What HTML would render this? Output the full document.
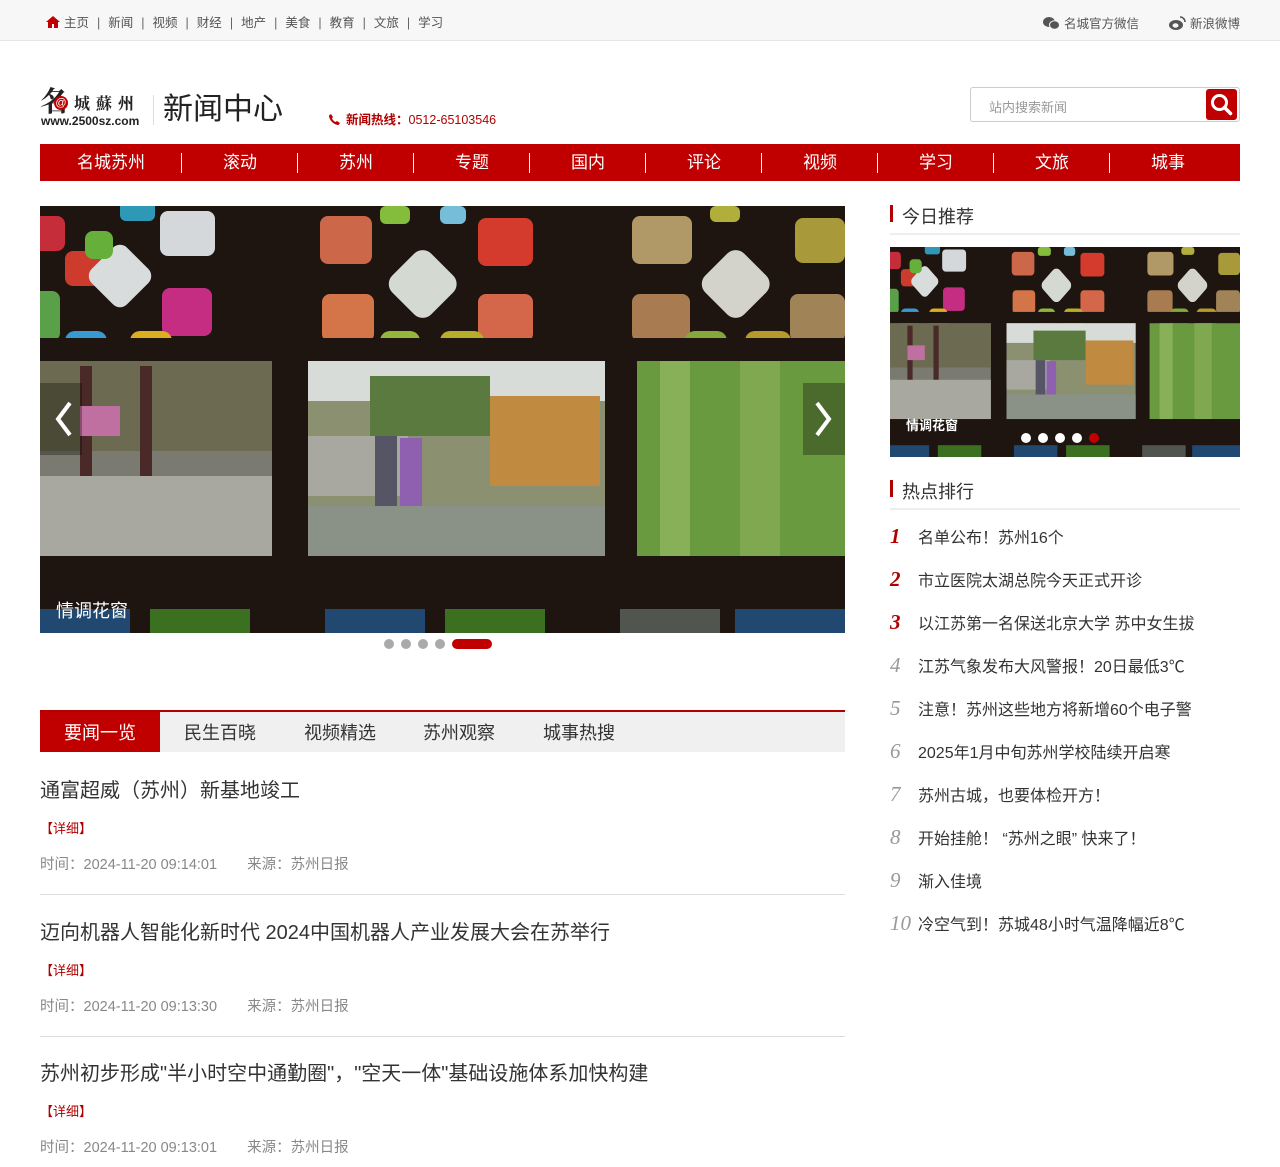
<!DOCTYPE html>
<html><head><meta charset="utf-8">
<style>
*{margin:0;padding:0;box-sizing:border-box}
body{width:1280px;height:1167px;overflow:hidden;background:#fff;font-family:"Liberation Sans","Noto Sans CJK SC",sans-serif;color:#333}
.top{height:41px;background:#f7f7f7;border-bottom:1px solid #e5e5e5;position:relative;font-size:12.5px;color:#555}
.top .l{position:absolute;left:46px;top:12px;white-space:nowrap}
.top .l span.s{margin:0 8px;color:#666}
.top .r{position:absolute;right:40px;top:13px;white-space:nowrap}
.abs{position:absolute}
.nav{position:absolute;left:40px;top:144px;width:1200px;height:37px;background:#c00000;display:flex}
.nav div{width:116px;color:#fff;font-size:17px;text-align:center;line-height:37px;position:relative}
.nav div:first-child{width:142px}
.nav div:last-child{width:130px;padding-right:14px}
.nav div:not(:last-child):after{content:"";position:absolute;right:0;top:9px;height:20px;width:1px;background:#fff}
.tabs{position:absolute;left:40px;top:710px;width:805px;height:42px;background:#f0f0f0;border-top:2px solid #b00000}
.tabs span{position:absolute;top:0;line-height:42px;font-size:18px;color:#333}
.news{position:absolute;left:40px;width:805px}
.news h3{font-weight:normal;font-size:20px;color:#333}
.news .d{font-size:13px;color:#b00000;margin-top:15px}
.news .t{font-size:14.5px;color:#888;margin-top:16px}
.hd{position:absolute;left:890px;width:350px;border-bottom:2px solid #eee;font-size:18px;color:#333;padding-left:12px;height:32px}
.hd:before{content:"";position:absolute;left:0;top:2px;width:3px;height:17px;background:#b00000}
.rk{position:absolute;left:890px;font-size:16px;color:#333;white-space:nowrap}
.rk i{display:inline-block;width:28px;font-family:"Liberation Serif",serif;font-size:21px;color:#999}
.rk i.red{color:#b00000;font-weight:bold}
</style></head><body>
<svg width="0" height="0" style="position:absolute">
<symbol id="sc" viewBox="0 0 805 427">
<rect width="805" height="427" fill="#1e1510"/>
<g opacity=".9">
<rect x="-10" y="10" width="35" height="35" rx="8" fill="#d83040"/>
<rect x="80" y="-10" width="35" height="25" rx="6" fill="#30a8c8"/>
<rect x="120" y="5" width="55" height="45" rx="8" fill="#e8eef2"/>
<rect x="25" y="45" width="40" height="35" rx="8" fill="#e04030"/>
<rect x="55" y="45" width="50" height="50" rx="10" fill="#eef2f4" transform="rotate(45 80 70)"/>
<rect x="45" y="25" width="28" height="28" rx="8" fill="#70c040"/>
<rect x="122" y="82" width="50" height="48" rx="8" fill="#d83090"/>
<rect x="-10" y="85" width="30" height="50" rx="8" fill="#60b050"/>
<rect x="25" y="125" width="42" height="60" rx="10" fill="#3ca8e8"/>
<rect x="90" y="125" width="42" height="60" rx="10" fill="#f0c020"/>
<rect x="280" y="10" width="52" height="48" rx="8" fill="#e07050"/>
<rect x="340" y="0" width="30" height="18" rx="6" fill="#90d040"/>
<rect x="400" y="0" width="26" height="18" rx="6" fill="#80d0f0"/>
<rect x="438" y="12" width="55" height="48" rx="8" fill="#e84030"/>
<rect x="355" y="50" width="55" height="55" rx="12" fill="#e8f0e8" transform="rotate(45 382 78)"/>
<rect x="282" y="88" width="52" height="48" rx="8" fill="#e88050"/>
<rect x="438" y="88" width="55" height="48" rx="8" fill="#e87050"/>
<rect x="340" y="125" width="40" height="60" rx="10" fill="#a0c840"/>
<rect x="400" y="125" width="44" height="60" rx="10" fill="#c8c030"/>
<rect x="592" y="10" width="60" height="48" rx="8" fill="#c0a870"/>
<rect x="670" y="0" width="30" height="16" rx="6" fill="#c0c040"/>
<rect x="755" y="12" width="50" height="45" rx="8" fill="#b8a840"/>
<rect x="668" y="50" width="55" height="55" rx="12" fill="#e8e8e0" transform="rotate(45 695 78)"/>
<rect x="592" y="88" width="58" height="48" rx="8" fill="#b88858"/>
<rect x="750" y="88" width="55" height="48" rx="8" fill="#b09060"/>
<rect x="645" y="125" width="42" height="60" rx="10" fill="#90b840"/>
<rect x="705" y="125" width="46" height="60" rx="10" fill="#c8a830"/>
</g>
<rect x="0" y="132" width="805" height="23" fill="#1e1510"/>
<rect x="0" y="155" width="232" height="195" fill="#7a7a70"/>
<rect x="0" y="155" width="232" height="90" fill="#6c6a50"/>
<rect x="40" y="160" width="12" height="140" fill="#4a2a28"/>
<rect x="100" y="160" width="12" height="140" fill="#4a2a28"/>
<rect x="0" y="270" width="232" height="80" fill="#a8a8a0"/>
<rect x="40" y="200" width="40" height="30" fill="#c070a0"/>
<rect x="268" y="155" width="297" height="195" fill="#8a9070"/>
<rect x="268" y="155" width="297" height="40" fill="#d8dcd8"/>
<rect x="330" y="170" width="120" height="60" fill="#5a7a40"/>
<rect x="450" y="190" width="110" height="90" fill="#c08a40"/>
<rect x="268" y="230" width="100" height="60" fill="#a8a8a0"/>
<rect x="335" y="230" width="22" height="70" fill="#556"/>
<rect x="360" y="232" width="22" height="68" fill="#9060b0"/>
<rect x="268" y="300" width="297" height="50" fill="#8a9288"/>
<rect x="597" y="155" width="208" height="195" fill="#6a9a40"/>
<rect x="620" y="155" width="30" height="195" fill="#88b058"/>
<rect x="700" y="155" width="40" height="195" fill="#80a850"/>
<rect x="0" y="350" width="805" height="77" fill="#1e1510"/>
<rect x="0" y="403" width="90" height="24" fill="#204870"/>
<rect x="110" y="403" width="100" height="24" fill="#3a7020"/>
<rect x="285" y="403" width="100" height="24" fill="#204870"/>
<rect x="405" y="403" width="100" height="24" fill="#3a7020"/>
<rect x="580" y="403" width="100" height="24" fill="#505550"/>
<rect x="695" y="403" width="110" height="24" fill="#204870"/>
</symbol>
</svg>

<div class="top">
 <div class="l"><svg width="14" height="12" viewBox="0 0 14 12" style="vertical-align:-1px;margin-right:4px"><path d="M7 0L0 6h2v6h4V8h2v4h4V6h2z" fill="#c00000"/></svg>主页<span class="s">|</span>新闻<span class="s">|</span>视频<span class="s">|</span>财经<span class="s">|</span>地产<span class="s">|</span>美食<span class="s">|</span>教育<span class="s">|</span>文旅<span class="s">|</span>学习</div>
 <div class="r"><svg width="17" height="14" viewBox="0 0 17 14" style="vertical-align:-2px;margin-right:4px"><ellipse cx="6" cy="6" rx="6" ry="5" fill="#555"/><ellipse cx="11.5" cy="9" rx="5" ry="4.2" fill="#555" stroke="#f7f7f7"/></svg>名城官方微信<span style="display:inline-block;width:30px"></span><svg width="17" height="14" viewBox="0 0 17 14" style="vertical-align:-2px;margin-right:4px"><ellipse cx="7" cy="9" rx="7" ry="5" fill="#555"/><ellipse cx="6.5" cy="9.5" rx="3" ry="2.2" fill="#f7f7f7"/><path d="M11 1a5 5 0 015 5" stroke="#555" stroke-width="1.6" fill="none"/></svg>新浪微博</div>
</div>

<div class="abs" style="left:40px;top:86px;width:105px;height:42px">
 <div style="position:absolute;left:0;top:0;font-family:'Noto Serif CJK SC',serif;font-size:28px;font-weight:bold;color:#222;line-height:28px">名</div>
 <div style="position:absolute;left:14px;top:10px;width:14px;height:14px;border-radius:50%;background:#c00000;color:#fff;font-size:11px;line-height:14px;text-align:center">@</div>
 <div style="position:absolute;left:34px;top:8px;font-family:'Noto Serif CJK SC',serif;font-size:16px;font-weight:bold;color:#222;letter-spacing:6px;line-height:18px">城蘇州</div>
 <div style="position:absolute;left:1px;top:28px;font-size:12px;font-weight:bold;color:#222">www.2500sz.com</div>
</div>
<div class="abs" style="left:153px;top:95px;width:1px;height:30px;background:#ddd"></div>
<div class="abs" style="left:163px;top:90px;font-size:30px;color:#222;line-height:40px">新闻中心</div>
<div class="abs" style="left:329px;top:109px;font-size:12.5px;color:#b00000;white-space:nowrap"><svg width="11" height="11" viewBox="0 0 11 11" style="vertical-align:-1px;margin-right:6px"><path d="M2 0l2 3-1 1.5c.8 1.6 2 2.8 3.5 3.5L8 7l3 2-1.5 2C5 11 0 6 0 1.5z" fill="#c00000"/></svg><b>新闻热线：</b>0512-65103546</div>
<div class="abs" style="left:970px;top:87px;width:270px;height:35px;border:1px solid #ccc;border-radius:3px">
 <span style="position:absolute;left:18px;top:9px;font-size:13px;color:#999">站内搜索新闻</span>
 <div style="position:absolute;right:2px;top:1px;width:31px;height:31px;background:#c00000;border-radius:3px"><svg width="31" height="31" viewBox="0 0 31 31"><circle cx="13.5" cy="13.5" r="7" stroke="#fff" stroke-width="3" fill="none"/><path d="M18.5 18.5l6 6" stroke="#fff" stroke-width="3.5" stroke-linecap="round"/></svg></div>
</div>

<div class="nav"><div>名城苏州</div><div>滚动</div><div>苏州</div><div>专题</div><div>国内</div><div>评论</div><div>视频</div><div>学习</div><div>文旅</div><div>城事</div></div>

<svg class="abs" style="left:40px;top:206px" width="805" height="427"><use href="#sc"/></svg>
<div class="abs" style="left:40px;top:383px;width:42px;height:72px;background:rgba(0,0,0,.3)"><svg width="42" height="72"><path d="M30 20L18 36l12 16" stroke="#fff" stroke-width="4" fill="none"/></svg></div>
<div class="abs" style="left:803px;top:383px;width:42px;height:72px;background:rgba(0,0,0,.3)"><svg width="42" height="72"><path d="M14 20l12 16-12 16" stroke="#fff" stroke-width="4" fill="none"/></svg></div>
<div class="abs" style="left:56px;top:597px;font-size:18px;color:#fff">情调花窗</div>
<div class="abs" style="left:384px;top:639px;height:10px;white-space:nowrap;font-size:0">
 <span style="display:inline-block;width:10px;height:10px;border-radius:5px;background:#aaa;margin-right:7px"></span><span style="display:inline-block;width:10px;height:10px;border-radius:5px;background:#aaa;margin-right:7px"></span><span style="display:inline-block;width:10px;height:10px;border-radius:5px;background:#aaa;margin-right:7px"></span><span style="display:inline-block;width:10px;height:10px;border-radius:5px;background:#aaa;margin-right:7px"></span><span style="display:inline-block;width:40px;height:10px;border-radius:5px;background:#c00000"></span>
</div>

<div class="tabs">
 <span style="left:0;width:120px;height:40px;background:#c00000;color:#fff;text-align:center">要闻一览</span>
 <span style="left:144px">民生百晓</span><span style="left:264px">视频精选</span><span style="left:383px">苏州观察</span><span style="left:503px">城事热搜</span>
</div>

<div class="news" style="top:774px"><h3>通富超威（苏州）新基地竣工</h3><div class="d">【详细】</div><div class="t">时间：2024-11-20 09:14:01<span style="margin-left:30px">来源：苏州日报</span></div></div>
<div class="abs" style="left:40px;top:894px;width:805px;height:1px;background:#ddd"></div>
<div class="news" style="top:916px"><h3>迈向机器人智能化新时代 2024中国机器人产业发展大会在苏举行</h3><div class="d">【详细】</div><div class="t">时间：2024-11-20 09:13:30<span style="margin-left:30px">来源：苏州日报</span></div></div>
<div class="abs" style="left:40px;top:1036px;width:805px;height:1px;background:#ddd"></div>
<div class="news" style="top:1057px"><h3>苏州初步形成"半小时空中通勤圈"，"空天一体"基础设施体系加快构建</h3><div class="d">【详细】</div><div class="t">时间：2024-11-20 09:13:01<span style="margin-left:30px">来源：苏州日报</span></div></div>

<div class="hd" style="top:203px">今日推荐</div>
<svg class="abs" style="left:890px;top:247px" width="350" height="210" viewBox="0 0 805 427" preserveAspectRatio="none"><use href="#sc"/></svg>
<div class="abs" style="left:906px;top:415px;font-size:13px;color:#fff;font-weight:bold">情调花窗</div>
<div class="abs" style="left:1021px;top:433px;font-size:0;white-space:nowrap">
 <span style="display:inline-block;width:10px;height:10px;border-radius:5px;background:#fff;margin-right:7px"></span><span style="display:inline-block;width:10px;height:10px;border-radius:5px;background:#fff;margin-right:7px"></span><span style="display:inline-block;width:10px;height:10px;border-radius:5px;background:#fff;margin-right:7px"></span><span style="display:inline-block;width:10px;height:10px;border-radius:5px;background:#fff;margin-right:7px"></span><span style="display:inline-block;width:10px;height:10px;border-radius:5px;background:#c00000"></span>
</div>

<div class="hd" style="top:478px">热点排行</div>
<div class="rk" style="top:524px"><i class="red">1</i>名单公布！苏州16个</div>
<div class="rk" style="top:567px"><i class="red">2</i>市立医院太湖总院今天正式开诊</div>
<div class="rk" style="top:610px"><i class="red">3</i>以江苏第一名保送北京大学 苏中女生拔</div>
<div class="rk" style="top:653px"><i>4</i>江苏气象发布大风警报！20日最低3℃</div>
<div class="rk" style="top:696px"><i>5</i>注意！苏州这些地方将新增60个电子警</div>
<div class="rk" style="top:739px"><i>6</i>2025年1月中旬苏州学校陆续开启寒</div>
<div class="rk" style="top:782px"><i>7</i>苏州古城，也要体检开方！</div>
<div class="rk" style="top:825px"><i>8</i>开始挂舱！ “苏州之眼” 快来了！</div>
<div class="rk" style="top:868px"><i>9</i>渐入佳境</div>
<div class="rk" style="top:911px"><i>10</i>冷空气到！苏城48小时气温降幅近8℃</div>
</body></html>
